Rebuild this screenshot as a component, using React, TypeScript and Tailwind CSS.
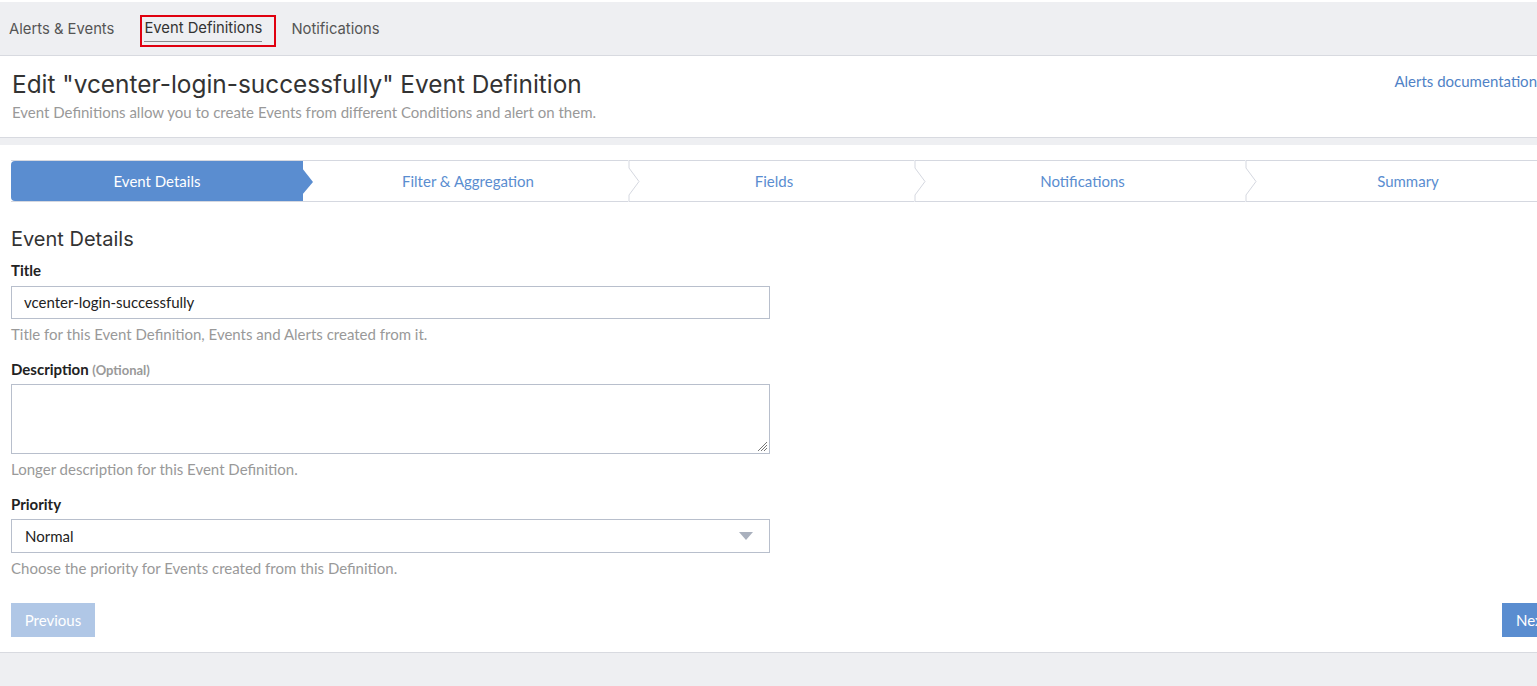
const steps = [
  { label: "Event Details", w: 292 },
  { label: "Filter & Aggregation", w: 326 },
  { label: "Fields", w: 286 },
  { label: "Notifications", w: 331 },
  { label: "Summary", w: 320 },
]

const body = { fontFamily: "Lato, 'Liberation Sans', sans-serif" }
const head = { fontFamily: "Inter, 'Liberation Sans', sans-serif" }

function Chevron({ active }: { active: boolean }) {
  if (active) {
    return (
      <svg className="absolute -right-[11px] top-0 z-10" width="12" height="41" viewBox="0 0 12 41">
        <polygon points="0,7 11,21 0,34" fill="#5a8dd0" />
      </svg>
    )
  }
  return (
    <svg className="absolute -right-[12px] -top-px z-10" width="13" height="42" viewBox="0 0 13 42">
      <polygon points="1,0 1,8 12,21.5 1,35 1,42 0,42 0,0" fill="#fff" />
      <polyline points="1,0 1,8 11,21.5 1,35 1,42" fill="none" stroke="#d5d8e0" strokeWidth="1" />
    </svg>
  )
}

export default function App() {
  return (
    <div className="min-h-[686px] w-[1537px] overflow-hidden bg-[#eeeff2] border-t-2 border-white" style={body}>
      {/* top nav */}
      <div className="h-[54px] pt-[2px] flex items-center border-b border-[#d8dae0] text-[14.8px] text-[#555]" style={head}>
        <span className="ml-[9px]">Alerts &amp; Events</span>
        <div className="ml-[26px] self-start mt-[11px] w-[136px] h-[32px] border-2 border-[#e0000f] flex items-start">
          <span className="ml-[2px] mt-[2px] text-[#333] border-b border-[#8c8c8c] pb-[4px] leading-[18px]">Event Definitions</span>
        </div>
        <span className="ml-[15px]">Notifications</span>
      </div>

      {/* page header */}
      <div className="bg-white h-[82px] border-b border-[#d8dae0] flex justify-between w-[1560px]">
        <div className="pl-[12px] pt-[13px]">
          <h1 className="text-[24.4px] leading-[30px] text-[#333]" style={head}>
            Edit "vcenter-login-successfully" Event Definition
          </h1>
          <p className="text-[15px] text-[#999] mt-[3px] leading-[20px]">
            Event Definitions allow you to create Events from different Conditions and alert on them.
          </p>
        </div>
        <a className="text-[15px] leading-[20px] text-[#5082c6] pt-[15px] pr-[23px]">Alerts documentation</a>
      </div>

      <div className="h-[7px]" />

      {/* main content */}
      <div className="bg-white h-[508px] border-b border-[#d8dae0] pt-[15px] pl-[11px] w-[1560px]">
        <div className="flex h-[42px] border-y border-[#d5d8e0] text-[15px]">
          {steps.map((s, i) => (
            <div
              key={s.label}
              className={
                i === 0
                  ? "relative flex items-center justify-center bg-[#5a8dd0] text-white rounded-l-[4px] shrink-0"
                  : "relative flex items-center justify-center text-[#5a8dd0] shrink-0"
              }
              style={{ width: s.w }}
            >
              <span className={i === 0 ? "" : "pl-[4px]"}>{s.label}</span>
              <Chevron active={i === 0} />
            </div>
          ))}
        </div>

        <div className="w-[759px] mt-[25px]">
          <h2 className="text-[20px] leading-[24px] text-[#333]" style={head}>Event Details</h2>

          <label className="block font-bold text-[15px] leading-[20px] text-[#222] mt-[9px]">Title</label>
          <div className="mt-[6px] h-[33px] border border-[#b8bfcc] flex items-center px-[12px] text-[15px] text-[#222]">
            vcenter-login-successfully
          </div>
          <p className="text-[15px] leading-[20px] text-[#999] mt-[5px]">Title for this Event Definition, Events and Alerts created from it.</p>

          <label className="block font-bold text-[15px] leading-[20px] text-[#222] mt-[15px]">
            Description <span className="text-[13px] text-[#999]">(Optional)</span>
          </label>
          <div className="relative mt-[4px] h-[70px] border border-[#b8bfcc]">
            <svg className="absolute right-[1px] bottom-[1px]" width="12" height="12" viewBox="0 0 12 12">
              <path d="M11 2 L2 11 M11 5 L5 11 M11 8 L8 11" stroke="#777" strokeWidth="1" />
            </svg>
          </div>
          <p className="text-[15px] leading-[20px] text-[#999] mt-[5px]">Longer description for this Event Definition.</p>

          <label className="block font-bold text-[15px] leading-[20px] text-[#222] mt-[15px]">Priority</label>
          <div className="mt-[5px] h-[34px] border border-[#b8bfcc] flex items-center justify-between pl-[13px] pr-[16px] text-[15px] text-[#222]">
            <span>Normal</span>
            <svg width="14" height="8" viewBox="0 0 14 8">
              <polygon points="0,0 14,0 7,8" fill="#a9b0bd" />
            </svg>
          </div>
          <p className="text-[15px] leading-[20px] text-[#999] mt-[5px]">Choose the priority for Events created from this Definition.</p>
        </div>

        <div className="flex justify-between mt-[25px] w-[1560px] pr-[11px]">
          <button className="h-[34px] w-[84px] bg-[#b0c7e6] text-white text-[15px]">Previous</button>
          <button className="h-[34px] pl-[14px] bg-[#5a8dd0] text-white text-[15px] w-[69px] mr-[-11px] text-left">Next</button>
        </div>
      </div>
    </div>
  )
}
